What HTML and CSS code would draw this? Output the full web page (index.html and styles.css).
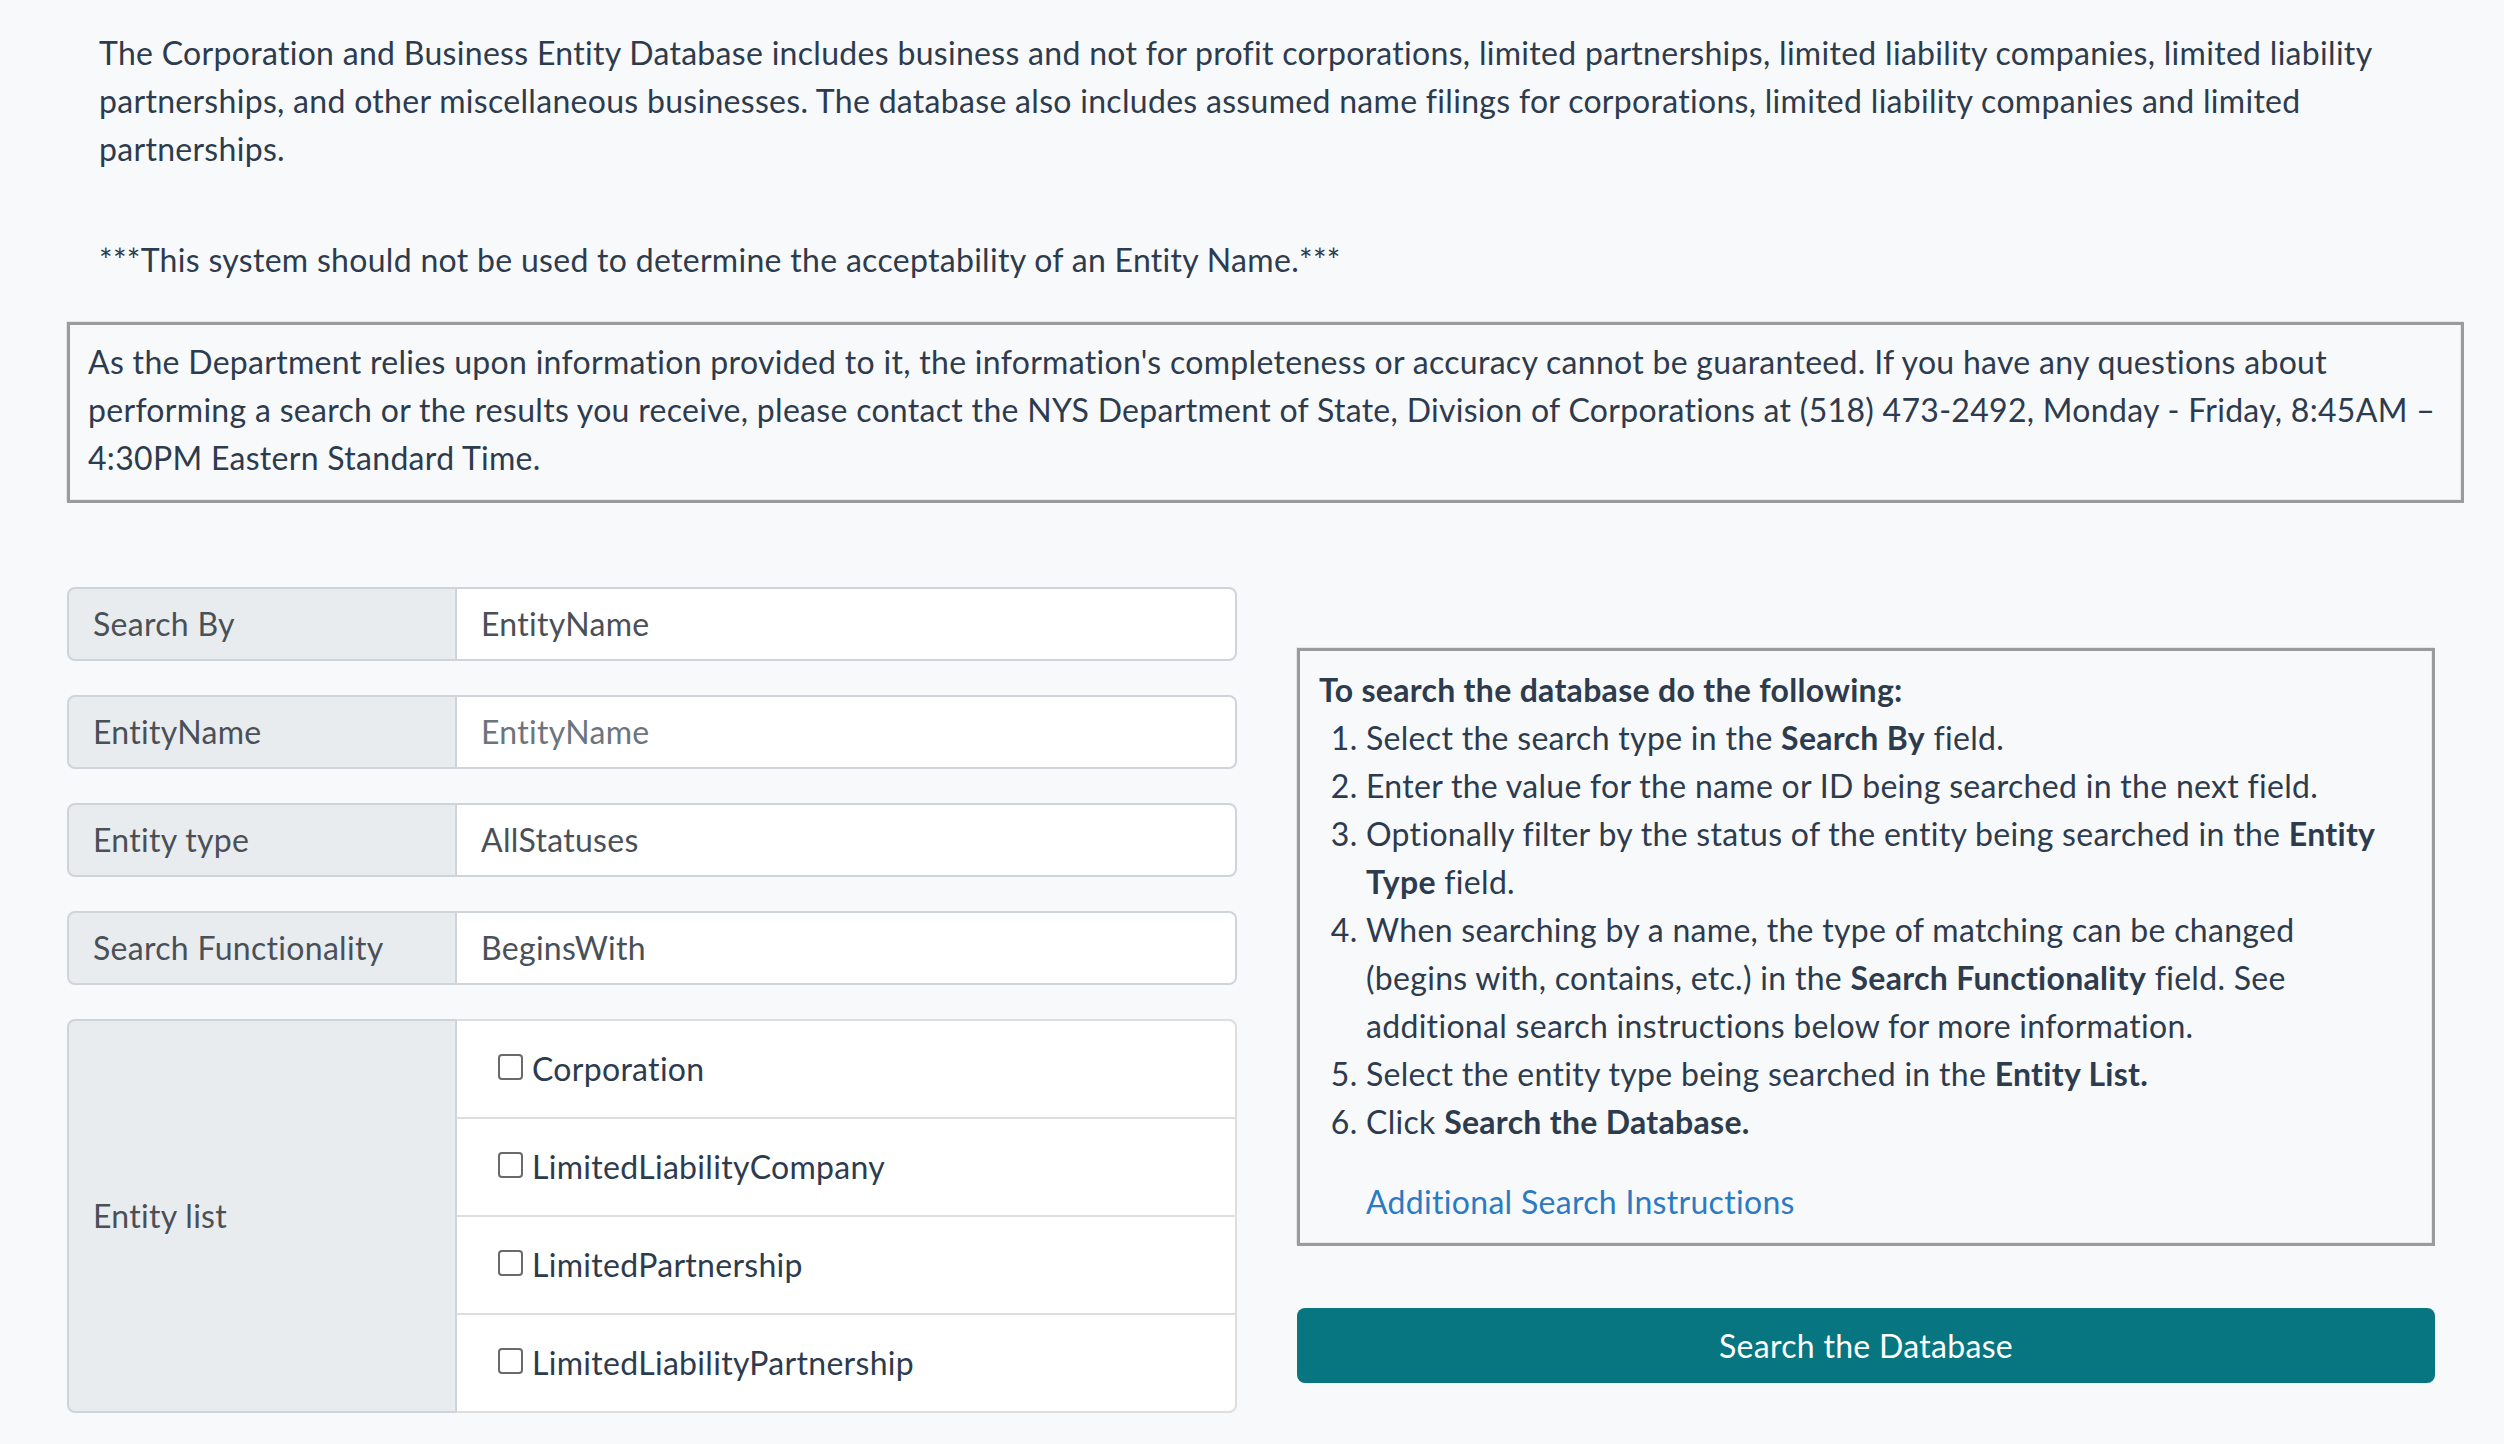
FILE: index.html
```html
<!DOCTYPE html>
<html lang="en">
<head>
    <meta charset="UTF-8">
    <meta name="viewport" content="width=device-width, initial-scale=1.0">
    <title>Corporation and Business Entity Database</title>
    <link rel="stylesheet" href="styles.css">
</head>
<body>

<main class="page">
    <p class="intro">The Corporation and Business Entity Database includes business and not for profit corporations, limited partnerships, limited liability companies, limited liability partnerships, and other miscellaneous businesses. The database also includes assumed name filings for corporations, limited liability companies and limited partnerships.</p>
    <p class="intro warning">***This system should not be used to determine the acceptability of an Entity Name.***</p>

    <div class="notice">
        As the Department relies upon information provided to it, the information's completeness or accuracy cannot be guaranteed. If you have any questions about performing a search or the results you receive, please contact the NYS Department of State, Division of Corporations at (518) 473-2492, Monday - Friday, 8:45AM &ndash; 4:30PM Eastern Standard Time.
    </div>

    <div class="search-area">
        <form class="search-form" id="searchForm">
            <div class="input-group">
                <label class="group-label" for="searchBy">Search By</label>
                <input class="group-field" type="text" id="searchBy" value="EntityName">
            </div>
            <div class="input-group">
                <label class="group-label" for="entityName">EntityName</label>
                <input class="group-field" type="text" id="entityName" placeholder="EntityName">
            </div>
            <div class="input-group">
                <label class="group-label" for="entityType">Entity type</label>
                <input class="group-field" type="text" id="entityType" value="AllStatuses">
            </div>
            <div class="input-group">
                <label class="group-label" for="searchType">Search Functionality</label>
                <input class="group-field" type="text" id="searchType" value="BeginsWith">
            </div>
            <div class="input-group list-group">
                <span class="group-label">Entity list</span>
                <ul class="entity-list">
                    <li><label><input type="checkbox" name="entity" value="Corporation"> Corporation</label></li>
                    <li><label><input type="checkbox" name="entity" value="LimitedLiabilityCompany"> LimitedLiabilityCompany</label></li>
                    <li><label><input type="checkbox" name="entity" value="LimitedPartnership"> LimitedPartnership</label></li>
                    <li><label><input type="checkbox" name="entity" value="LimitedLiabilityPartnership"> LimitedLiabilityPartnership</label></li>
                </ul>
            </div>
        </form>

        <aside class="help">
            <div class="help-box">
                <strong class="help-title">To search the database do the following:</strong>
                <ol class="steps">
                    <li>Select the search type in the <b>Search By</b> field.</li>
                    <li>Enter the value for the name or ID being searched in the next field.</li>
                    <li>Optionally filter by the status of the entity being searched in the <b>Entity Type</b> field.</li>
                    <li>When searching by a name, the type of matching can be changed (begins with, contains, etc.) in the <b>Search Functionality</b> field. See additional search instructions below for more information.</li>
                    <li>Select the entity type being searched in the <b>Entity List.</b></li>
                    <li>Click <b>Search the Database.</b></li>
                </ol>
                <a class="more-link" href="#">Additional Search Instructions</a>
            </div>
            <button class="search-button" type="submit" form="searchForm">Search the Database</button>
        </aside>
    </div>
</main>

</body>
</html>
```

FILE: styles.css
```css
body {
    margin: 0;
    background-color: #f8f9fa;
    color: #2d3b4e;
    font-family: Lato, "Open Sans", sans-serif;
    font-size: 32px;
    line-height: 48px;
    letter-spacing: 0.3px;
}
.page {
    padding: 29px 40px 40px 67px;
}
.intro {
    margin: 0;
    padding-left: 32px;
}
.warning {
    margin-top: 63px;
}
.notice {
    margin-top: 38px;
    padding: 13px 20px 18px 18px;
    border: 3px solid #9b9b9b;
    box-shadow: -1px -1px 0 #e6e6e6, inset -1px -1px 0 #e9e9e9;
}
.search-area {
    display: flex;
    gap: 60px;
    margin-top: 84px;
}

/* left column: label + field pairs */
.search-form {
    width: 1170px;
    display: flex;
    flex-direction: column;
    gap: 34px;
}
.input-group {
    display: flex;
    height: 74px;
}
.group-label {
    width: 390px;
    flex-shrink: 0;
    box-sizing: border-box;
    display: flex;
    align-items: center;
    padding: 0 24px;
    background-color: #e9ecef;
    border: 2px solid #ced4da;
    border-radius: 8px 0 0 8px;
    color: #495057;
}
.group-field {
    flex: 1;
    min-width: 0;
    margin: 0;
    padding: 0 24px;
    border: 2px solid #ced4da;
    border-left: none;
    border-radius: 0 8px 8px 0;
    background: white;
    font: inherit;
    letter-spacing: inherit;
    color: #495057;
}
.group-field::placeholder {
    color: #6c757d;
}
.list-group {
    height: auto;
}
.entity-list {
    flex: 1;
    margin: 0;
    padding: 0;
    list-style: none;
    background: white;
    border: 2px solid #dedede;
    border-left: none;
    border-radius: 0 8px 8px 0;
}
.entity-list li {
    height: 96px;
    display: flex;
    align-items: center;
    padding-left: 41px;
    border-top: 2px solid #dedede;
}
.entity-list li:first-child {
    border-top: none;
}
.entity-list label {
    display: flex;
    align-items: center;
}
.entity-list input {
    appearance: none;
    width: 25px;
    height: 26px;
    margin: 0 9px 4px 0;
    border: 2px solid #6a6a6a;
    border-radius: 4px;
    background: white;
}

/* right column: instructions and submit */
.help {
    width: 1138px;
    padding-top: 61px;
}
.help-box {
    padding: 15px 44px 17px 19px;
    border: 3px solid #9b9b9b;
    box-shadow: -1px -1px 0 #e6e6e6, inset -1px -1px 0 #e9e9e9;
}
.help-title {
    display: block;
}
.steps {
    margin: 0;
    padding-left: 47px;
}
.steps b {
    font-weight: bold;
}
.more-link {
    display: inline-block;
    margin: 32px 0 0 47px;
    color: #2b7bc3;
    text-decoration: none;
}
.search-button {
    display: block;
    width: 100%;
    height: 75px;
    margin-top: 62px;
    border: none;
    border-radius: 8px;
    background-color: #077680;
    color: white;
    font: inherit;
    letter-spacing: inherit;
    cursor: pointer;
}
```
